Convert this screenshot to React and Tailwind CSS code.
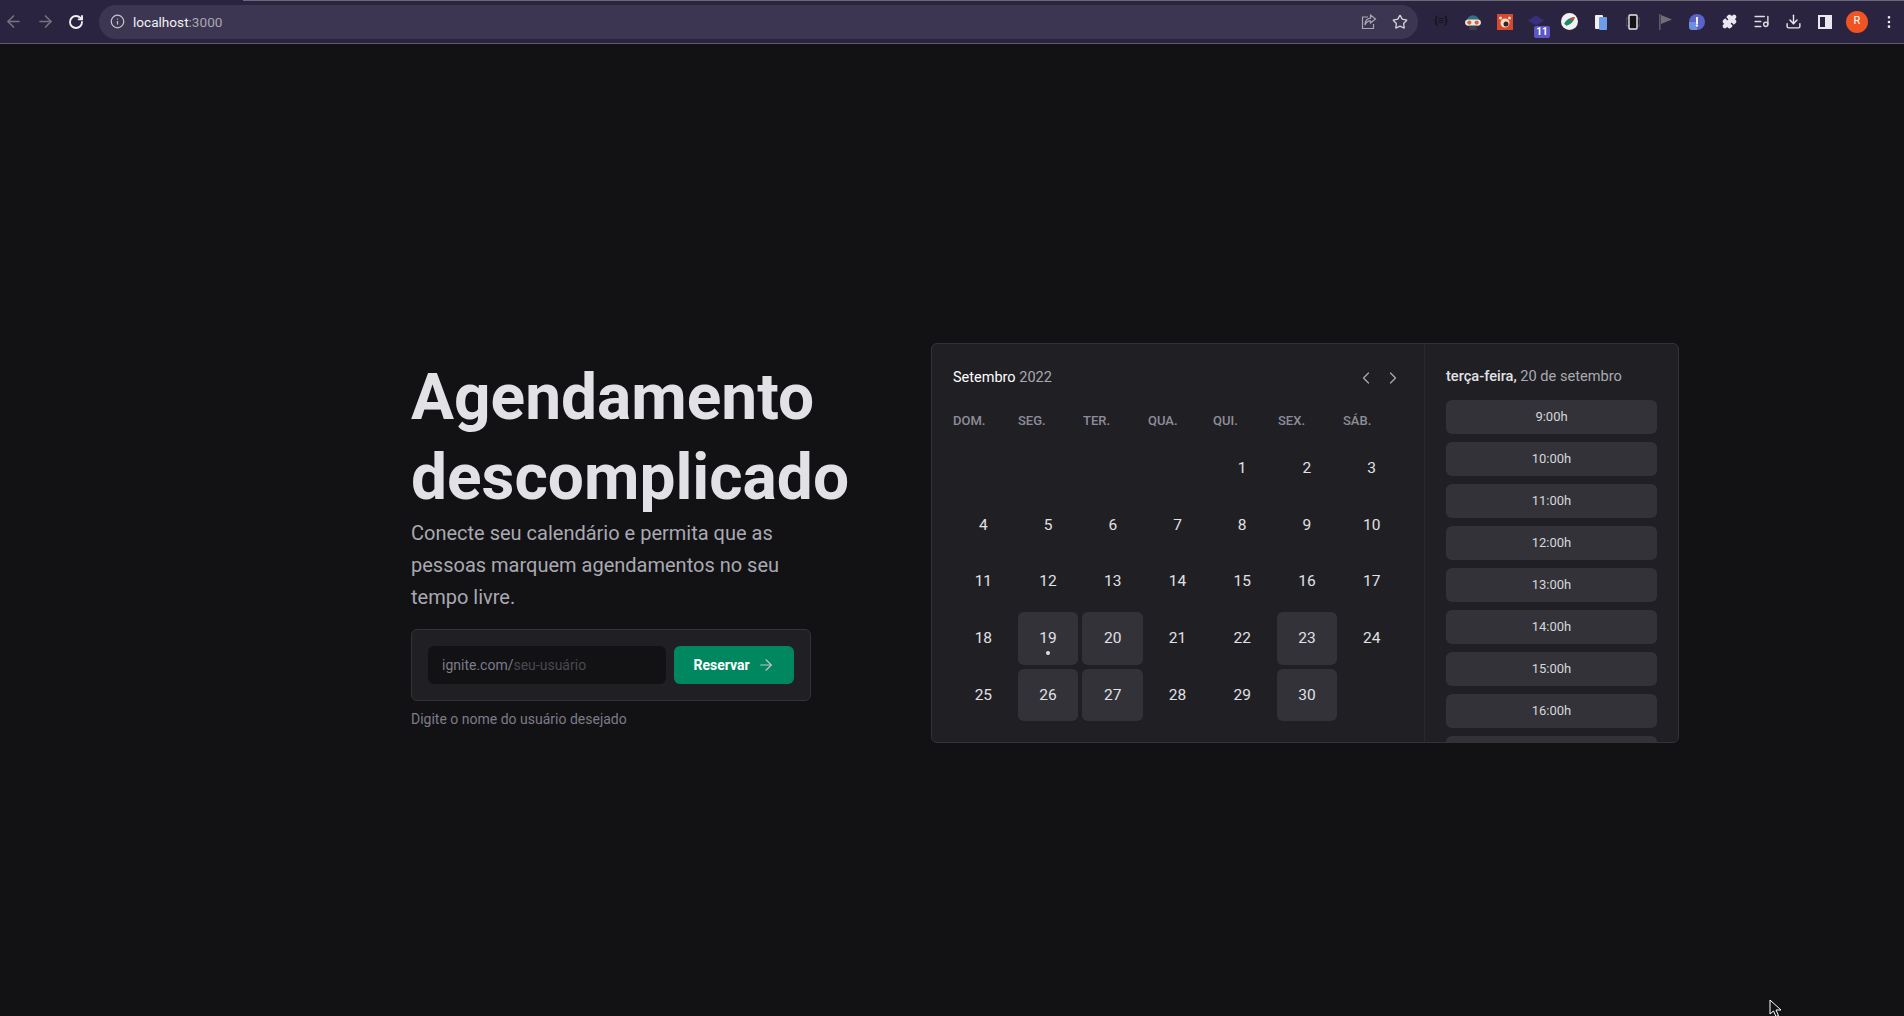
import React from 'react';
import { ArrowLeft, ArrowRight, RotateCw, Info, Star, Puzzle, Download, ChevronLeft, ChevronRight, EllipsisVertical, ListMusic } from 'lucide-react';

const weekDays = ['DOM.', 'SEG.', 'TER.', 'QUA.', 'QUI.', 'SEX.', 'SÁB.'];
const weeks = [
  [null, null, null, null, 1, 2, 3],
  [4, 5, 6, 7, 8, 9, 10],
  [11, 12, 13, 14, 15, 16, 17],
  [18, 19, 20, 21, 22, 23, 24],
  [25, 26, 27, 28, 29, 30, null],
];
const enabledDays = [19, 20, 23, 26, 27, 30];
const times = ['9:00h', '10:00h', '11:00h', '12:00h', '13:00h', '14:00h', '15:00h', '16:00h', '17:00h'];

function Slot({ children }) {
  return <div className="relative w-[32px] h-full shrink-0 flex items-center justify-center">{children}</div>;
}

function ExtensionIcons() {
  return (
    <div className="flex items-center h-full shrink-0 pl-[7px]">
      <Slot><span className="text-[11px] font-bold text-[#14121c]">{'{≡}'}</span></Slot>
      <Slot>
        <svg width="16" height="19" viewBox="0 0 15 18">
          <path d="M1.5 9a6 6 0 0 1 12 0z" fill="#2f6f80" />
          <rect x="0" y="7" width="15" height="6" rx="3" fill="#e8e8e8" />
          <circle cx="4" cy="10" r="2" fill="#d9653b" />
          <circle cx="11" cy="10" r="2" fill="#d9653b" />
          <rect x="4" y="13" width="7" height="4" fill="#39424a" />
        </svg>
      </Slot>
      <Slot>
        <svg width="16" height="16" viewBox="0 0 16 16">
          <rect width="16" height="16" fill="#d8482c" />
          <circle cx="8" cy="9" r="4.5" fill="#f0dfd0" />
          <circle cx="9" cy="10" r="2.5" fill="#3b2418" />
          <circle cx="3.5" cy="4" r="1.5" fill="#f0dfd0" />
          <circle cx="12.5" cy="4" r="1.5" fill="#f0dfd0" />
        </svg>
      </Slot>
      <Slot>
        <svg width="16" height="13" viewBox="0 0 16 12" className="absolute left-[7px] top-[15px]">
          <path d="M8 0l8 5-8 5-8-5z" fill="#3a2f7d" />
        </svg>
        <span className="absolute left-[13px] top-[26px] w-[16px] h-[12px] rounded-[2px] bg-[#5b57c4] text-white text-[10px] leading-[12px] font-bold text-center">11</span>
      </Slot>
      <Slot>
        <svg width="17" height="17" viewBox="0 0 16 16">
          <circle cx="8" cy="8" r="8" fill="#f2f2f2" />
          <path d="M3 10c2-4 6-6 10-6-1 4-4 7-8 8z" fill="#1c8a6b" />
          <path d="M8 5c2-1 4-1 5-1-1 2-2 3-3 3z" fill="#d8452f" />
        </svg>
      </Slot>
      <Slot>
        <svg width="13" height="16" viewBox="0 0 13 16">
          <rect x="0" y="1" width="8" height="14" rx="1" fill="#f0f0f0" />
          <rect x="4" y="3" width="8" height="13" rx="1" fill="#6d9ee8" />
        </svg>
      </Slot>
      <Slot>
        <svg width="14" height="16" viewBox="0 0 14 16">
          <rect x="0" y="4" width="14" height="8" rx="1" fill="none" stroke="#5a5a66" />
          <rect x="3" y="1" width="8" height="14" rx="1" fill="#141318" stroke="#e8e8e8" strokeWidth="1.4" />
        </svg>
      </Slot>
      <Slot>
        <svg width="13" height="16" viewBox="0 0 13 16">
          <rect x="0" y="0" width="1.6" height="16" fill="#5a5a66" />
          <path d="M2 1l11 4.5L2 10z" fill="#6f6f7a" />
        </svg>
      </Slot>
      <Slot>
        <svg width="16" height="16" viewBox="0 0 16 16">
          <circle cx="8" cy="8" r="8" fill="#5b62c9" />
          <path d="M0 8h8v8H3a3 3 0 0 1-3-3z" fill="#6d8fe0" />
          <rect x="7" y="3" width="2" height="7" fill="#f0f0f0" />
          <circle cx="8" cy="11.5" r="1.2" fill="#f0f0f0" />
        </svg>
      </Slot>
      <Slot><Puzzle size={15} className="text-[#e8e8ee] fill-[#e8e8ee]" /></Slot>
      <Slot><ListMusic size={17} className="text-[#dcdce2]" /></Slot>
      <Slot><Download size={17} className="text-[#e8e8ee]" /></Slot>
      <Slot>
        <div className="w-[14px] h-[14px] border-2 border-[#e8e8ee] flex justify-end">
          <div className="w-[5px] h-full bg-[#e8e8ee]" />
        </div>
      </Slot>
      <Slot>
        <div className="w-[22px] h-[22px] rounded-full bg-[#f05423] text-white text-[11px] flex items-center justify-center">R</div>
      </Slot>
      <Slot><EllipsisVertical size={16} className="text-[#e8e8ee]" /></Slot>
    </div>
  );
}

function BrowserBar() {
  return (
    <header className="relative h-[44px] shrink-0 bg-[#2a2440] border-b border-[#5f5b6e] flex items-center font-['Roboto',sans-serif]">
      <div className="absolute left-[243px] right-0 top-0 h-px bg-[#6b6878]" />
      <div className="flex items-center shrink-0 pl-[4px] w-[99px] gap-[13px]">
        <ArrowLeft size={19} className="text-[#76747f]" />
        <ArrowRight size={19} className="text-[#76747f]" />
        <RotateCw size={16} strokeWidth={2.8} className="text-[#f0f0f2]" />
      </div>
      <div className="w-[1319px] h-[34px] shrink-0 rounded-full bg-[#3c3652] flex items-center pl-[11px] pr-[10px]">
        <Info size={15} className="text-[#c6c5cc]" />
        <span className="ml-[8px] pt-[1px] text-[13.6px] text-[#f1f1f3]">localhost<span className="text-[#a9a7b2]">:3000</span></span>
        <svg width="16" height="16" viewBox="0 0 16 16" fill="none" stroke="#a9a7b2" strokeWidth="1.2" className="ml-auto mr-[15px]">
          <path d="M7 3H1.5v11.5h11V10" />
          <path d="M9.5 1l5 4-5 4V6.8C7 6.8 5 8 4 11c0-4 2-6.4 5.5-6.8z" />
        </svg>
        <Star size={16} className="text-[#d4d3da]" />
      </div>
      <ExtensionIcons />
    </header>
  );
}

function DayCell({ day }) {
  if (!day) return <div className="h-[52.6px]" />;
  const enabled = enabledDays.includes(day);
  return (
    <div className={`relative h-[52.6px] rounded-[6px] flex items-center justify-center text-[15.5px] text-[#e1e1e6] ${enabled ? 'bg-[#323238]' : ''}`}>
      {day}
      {day === 19 && <span className="absolute bottom-[10px] left-1/2 -translate-x-1/2 w-[4px] h-[4px] rounded-full bg-[#e1e1e6]" />}
    </div>
  );
}

function Calendar() {
  return (
    <div className="w-[493px] h-full border-r border-[#29292e] pl-[21px] pr-[22px] pt-[22px]">
      <div className="flex items-center justify-between h-[24px]">
        <p className="h-[24px] leading-[23px] text-[14.5px] text-white">Setembro <span className="text-[#a9a9b2]">2022</span></p>
        <div className="flex items-center gap-[7px] -mr-[1px]">
          <ChevronLeft size={20} strokeWidth={1.5} className="text-[#a9a9b2]" />
          <ChevronRight size={20} strokeWidth={1.5} className="text-[#a9a9b2]" />
        </div>
      </div>
      <div className="mt-[23px] w-[451px] grid grid-cols-7 gap-x-[4px]">
        {weekDays.map((d) => (
          <span key={d} className="text-[13px] leading-[16px] font-medium text-[#8d8d99]">{d}</span>
        ))}
      </div>
      <div className="mt-[13.5px] grid grid-cols-7 gap-[4px]">
        {weeks.flat().map((day, i) => (
          <DayCell key={i} day={day} />
        ))}
      </div>
    </div>
  );
}

function TimePicker() {
  return (
    <div className="flex-1 h-full px-[21px] pt-[22px] overflow-hidden">
      <p className="h-[24px] leading-[21px] text-[14.6px] font-medium text-[#e1e1e6]">terça-feira, <span className="font-normal text-[#a9a9b2]">20 de setembro</span></p>
      <div className="mt-[10px] flex flex-col gap-[8px]">
        {times.map((t) => (
          <div key={t} className="h-[34px] shrink-0 rounded-[6px] bg-[#323238] flex items-center justify-center text-[13px] text-[#d6d6db]">{t}</div>
        ))}
      </div>
    </div>
  );
}

export default function App() {
  return (
    <div className="relative h-[1016px] overflow-hidden bg-[#121214] flex flex-col font-['Roboto',sans-serif]">
      <BrowserBar />
      <main className="flex pt-[299px] pl-[411px]">
        <section className="w-[520px] pt-[15px]">
          <h1 className="text-[64px] leading-[80px] font-bold text-[#e1e1e6]">Agendamento descomplicado</h1>
          <p className="w-[420px] -mt-[1px] text-[20px] leading-[32px] text-[#a9a9b2]">Conecte seu calendário e permita que as pessoas marquem agendamentos no seu tempo livre.</p>
          <div className="w-[400px] h-[72px] mt-[16px] rounded-[6px] border border-[#323238] bg-[#202024] flex items-center gap-[8px] px-[16px]">
            <div className="w-[238px] h-[38px] rounded-[6px] bg-[#121214] flex items-center pl-[14px] text-[14px]">
              <span className="text-[#7c7c8a]">ignite.com/</span>
              <span className="text-[#4b4852]">seu-usuário</span>
            </div>
            <button className="w-[120px] h-[38px] rounded-[6px] bg-[#00875f] flex items-center justify-center gap-[7px] text-[14px] font-bold text-white">
              Reservar
              <ArrowRight size={18} strokeWidth={1.5} className="text-[#c4c4cc]" />
            </button>
          </div>
          <p className="mt-[8px] text-[14px] leading-[20px] text-[#7c7c8a]">Digite o nome do usuário desejado</p>
        </section>
        <section className="w-[748px] h-[400px] rounded-[6px] border border-[#323238] bg-[#202024] flex overflow-hidden">
          <Calendar />
          <TimePicker />
        </section>
      </main>
      <svg width="13" height="18" viewBox="0 0 13 18" className="absolute left-[1769px] top-[999px]">
        <path d="M1 1v14l3.5-3 2.5 5.5 2.5-1L7 11h5z" fill="#111" stroke="#fff" strokeWidth="1" />
      </svg>
    </div>
  );
}
